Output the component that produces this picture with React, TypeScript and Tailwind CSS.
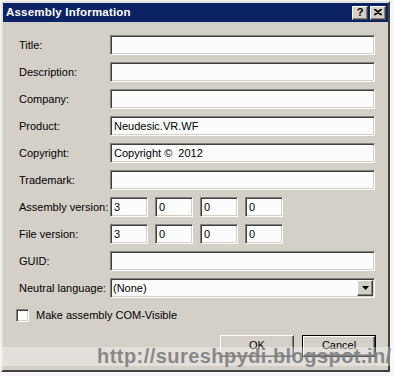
import React from "react";

const font = { fontFamily: '"Liberation Sans", Arial, sans-serif' };

const sunken =
  "border border-t-[#808080] border-l-[#808080] border-r-white border-b-white shadow-[inset_1px_1px_0_#404040,inset_-1px_-1px_0_#d4d0c8] bg-[#fcfcfc]";
const raised =
  "border border-t-white border-l-white border-b-[#404040] border-r-[#404040] shadow-[inset_-1px_-1px_0_#808080] bg-[#d4d0c8]";

function Field({ value = "" }: { value?: string }) {
  return (
    <div className={`${sunken} h-[20px] w-[265px] flex items-center pl-[3px] text-[11px] text-black`}>
      {value}
    </div>
  );
}

function Small({ value }: { value: string }) {
  return (
    <div className={`${sunken} h-[20px] w-[38px] flex items-center pl-[3px] text-[11px] text-black`}>
      {value}
    </div>
  );
}

function Versions({ vals }: { vals: string[] }) {
  return (
    <div className="flex gap-[7px]">
      {vals.map((v, i) => (
        <Small key={i} value={v} />
      ))}
    </div>
  );
}

function Label({ children }: { children: React.ReactNode }) {
  return <div className="h-[20px] flex items-center text-[11px] text-black">{children}</div>;
}

export default function App() {
  return (
    <div className="w-[394px] h-[376px] bg-[#f6f6f6] relative overflow-hidden" style={font}>
      <div className="ml-[1px] mt-[1px] w-[389px] h-[371px] border-2 border-t-[#e4e2dc] border-l-[#e4e2dc] border-r-[#404040] border-b-[#404040] bg-[#d4d0c8] flex flex-col">
        {/* Title bar */}
        <div className="h-[19px] bg-[#0b2263] flex items-center justify-between pl-[3px] pr-[2px]">
          <span className="text-white font-bold text-[11.5px] leading-none tracking-[0.2px]">Assembly Information</span>
          <div className="flex gap-[2px]">
            <div className={`${raised} w-[16px] h-[14px] flex items-center justify-center text-[11px] font-bold text-black leading-none`}>
              ?
            </div>
            <div className={`${raised} w-[16px] h-[14px] flex items-center justify-center`}>
              <svg width="8" height="7" viewBox="0 0 8 7">
                <path d="M0 0 L7 6 M1 0 L8 6 M7 0 L0 6 M8 0 L1 6" stroke="#000" strokeWidth="1.1" />
              </svg>
            </div>
          </div>
        </div>

        {/* Body */}
        <div className="pt-[13px] pl-[16px]">
          <div className="grid grid-cols-[91px_265px] gap-y-[7px]">
            <Label>Title:</Label>
            <Field />
            <Label>Description:</Label>
            <Field />
            <Label>Company:</Label>
            <Field />
            <Label>Product:</Label>
            <Field value="Neudesic.VR.WF" />
            <Label>Copyright:</Label>
            <Field value={"Copyright \u00A9\u00A0 2012"} />
            <Label>Trademark:</Label>
            <Field />
            <Label>Assembly version:</Label>
            <Versions vals={["3", "0", "0", "0"]} />
            <Label>File version:</Label>
            <Versions vals={["3", "0", "0", "0"]} />
            <Label>GUID:</Label>
            <Field />
            <Label>Neutral language:</Label>
            <div className={`${sunken} h-[20px] w-[265px] flex items-center justify-between pl-[2px] pr-[1px] text-[11px] text-black`}>
              <span>(None)</span>
              <div className={`${raised} w-[16px] h-[16px] flex items-center justify-center`}>
                <svg width="7" height="4" viewBox="0 0 7 4">
                  <path d="M0 0 H7 L3.5 4 Z" fill="#000" />
                </svg>
              </div>
            </div>
          </div>
        </div>

        <div className="mt-[9px] pl-[13px] flex items-center gap-[7px]">
          <div className={`${sunken} w-[13px] h-[13px] bg-white`} />
          <span className="text-[11px] text-black">Make assembly COM-Visible</span>
        </div>

        <div className="mt-[11px] flex justify-end gap-[8px] pr-[12px]">
          <div className={`${raised} w-[74px] h-[22px] flex items-center justify-center text-[11px] text-black`}>
            OK
          </div>
          <div className="w-[74px] h-[22px] border border-black">
            <div className={`${raised} w-full h-full flex items-center justify-center text-[11px] text-black`}>
              Cancel
            </div>
          </div>
        </div>
      </div>

      {/* Watermark */}
      <div className="absolute left-0 right-0 top-[347px] h-[19px] bg-white/35" />
      <div
        className="absolute left-[97px] top-[346px] text-[20px] font-bold text-[#7c7c7c]/90 leading-none tracking-[0.45px] whitespace-nowrap"
        style={{ fontFamily: '"Liberation Sans", Arial, sans-serif' }}
      >
        http://sureshpydi.blogspot.in/
      </div>
    </div>
  );
}
